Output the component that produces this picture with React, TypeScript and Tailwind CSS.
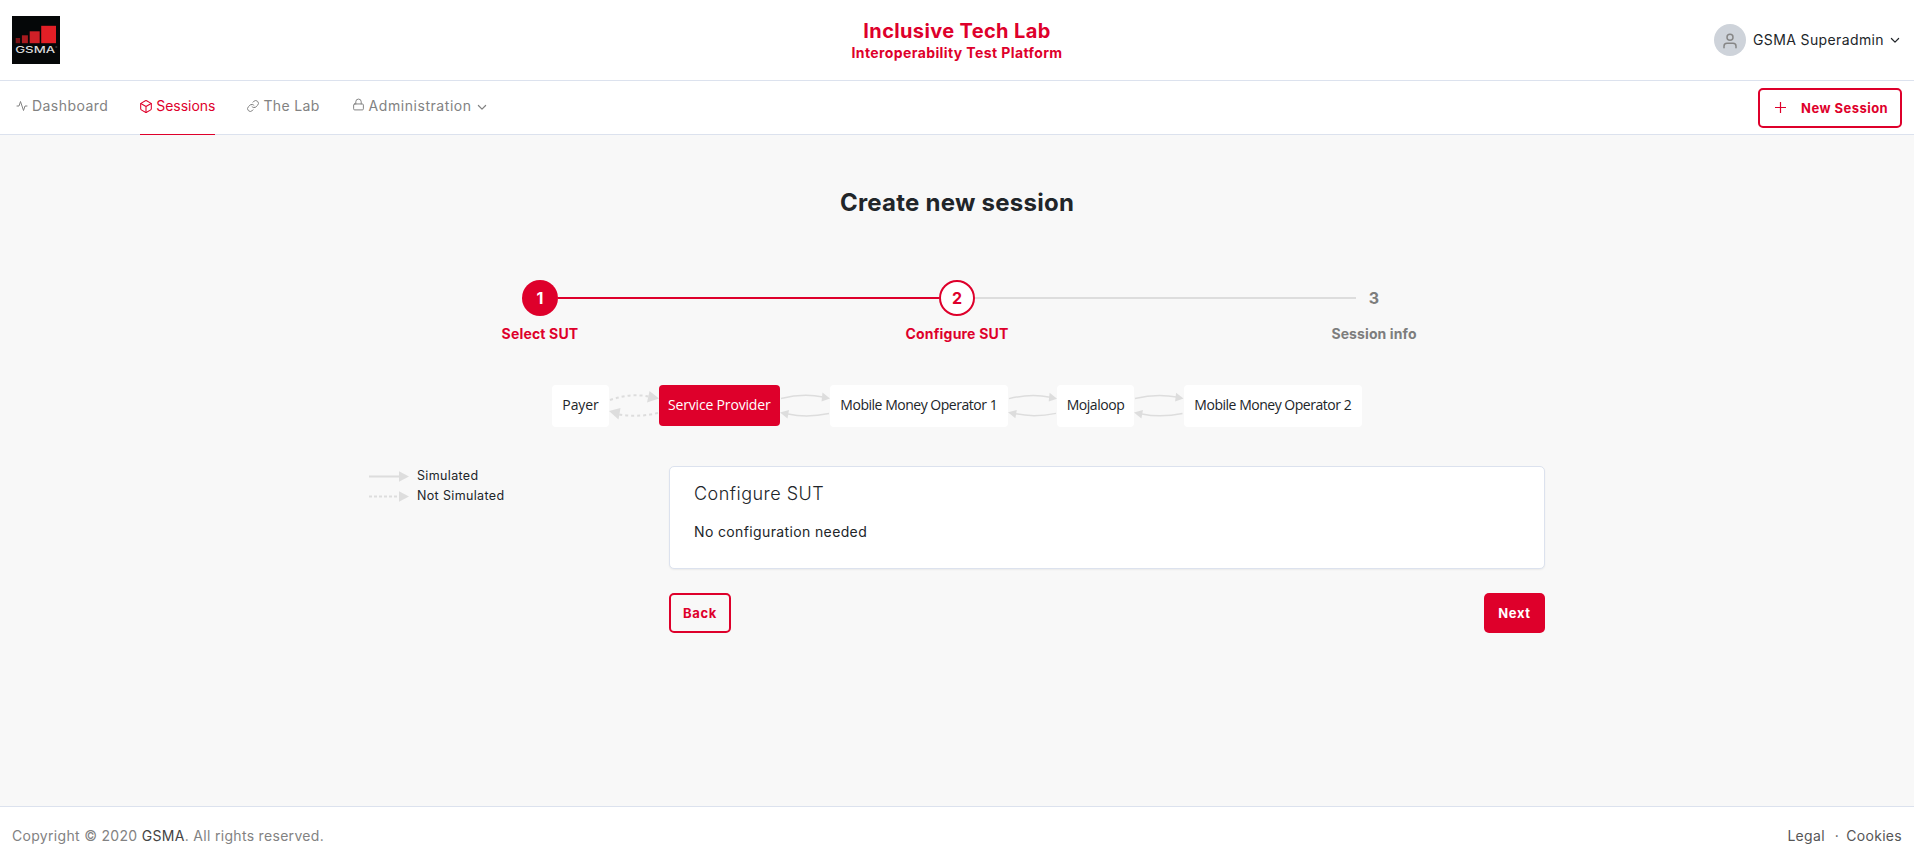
import React from "react";

function Chevron({ className }: { className?: string }) {
  return (
    <svg className={className} viewBox="0 0 10 7" fill="none" stroke="currentColor" strokeWidth="1.2" strokeLinecap="round" strokeLinejoin="round">
      <path d="M1.4 1.5 5 5.1l3.6-3.6" />
    </svg>
  );
}

function Logo() {
  return (
    <svg className="h-12 w-12" viewBox="0 0 48 48">
      <rect width="48" height="48" fill="#050708" />
      <rect x="3.7" y="22" width="4.4" height="5.2" fill="#7a1215" />
      <rect x="9.9" y="19.3" width="6" height="7.9" fill="#a91a1e" />
      <rect x="17.7" y="15.3" width="10" height="11.9" fill="#cf2027" />
      <rect x="29.2" y="9.8" width="14.8" height="17.4" fill="#e21f26" />
      <text x="3.2" y="37" fontFamily="Inter, sans-serif" fontSize="9" fontWeight="500" fill="#d9d9d9" textLength="40" lengthAdjust="spacingAndGlyphs">GSMA</text>
      <rect x="43.4" y="30.6" width="1.8" height="0.8" fill="#777" />
    </svg>
  );
}

function DashedArrows({ className }: { className: string }) {
  return (
    <svg className={className} viewBox="0 0 50 42" fill="none" stroke="#dddddd" strokeWidth="2">
      <path d="M1 15Q23 7.500 42 12" strokeDasharray="3 3" />
      <path d="M49 28Q27 33 8 29" strokeDasharray="3 3" />
      <g fill="#dddddd" stroke="none">
        <path d="M40.500 6 50 13.500 38 17.500z" />
        <path d="M0 26 11.500 23 9.500 34.500z" />
      </g>
    </svg>
  );
}

function SolidArrows({ className }: { className: string }) {
  return (
    <svg className={className} viewBox="0 0 50 42" fill="none" stroke="#dddddd" strokeWidth="1.5">
      <path d="M1 13.500Q23 8 43 12" />
      <path d="M49 28.500Q27 33 8 29" />
      <g fill="#dddddd" stroke="none">
        <path d="M42.500 7.500 50 13.500 41.500 16.500z" />
        <path d="M0 27.500 9 25 7.500 33.500z" />
      </g>
    </svg>
  );
}

function LegendArrow({ dashed = false }: { dashed?: boolean }) {
  return (
    <svg className="h-[11px] w-10" viewBox="0 0 40 11">
      <path d="M0 5.500H30" stroke="#dddddd" strokeWidth="2" strokeDasharray={dashed ? "3 2" : undefined} />
      <path d="M30 .3 40 5.500 30 10.700z" fill="#dddddd" />
    </svg>
  );
}

function Node({ className, children }: { className: string; children: string }) {
  return (
    <div className={`flex items-center justify-center whitespace-nowrap rounded-[4px] pb-0.5 font-['Open_Sans',sans-serif] text-[14px] leading-5 ${className}`}>
      {children}
    </div>
  );
}

export default function App() {
  return (
    <div className="flex h-[868px] w-full flex-col bg-[#f8f8f8] font-[Inter,sans-serif] text-[14px] leading-[22px] text-[#212529]">
      <header className="grid h-[81px] grid-cols-[1fr_auto_1fr] border-b border-[#dce2ee] bg-white px-3">
        <div className="flex items-center"><Logo /></div>
        <div className="flex flex-col items-center pt-[19px] font-bold text-[#de002b]">
          <div className="text-[20px] leading-6 tracking-[0.36px]">Inclusive Tech Lab</div>
          <div className="text-[14px] leading-5 tracking-[0.4px]">Interoperability Test Platform</div>
        </div>
        <div className="flex items-center justify-end">
          <div className="flex h-8 w-8 items-center justify-center rounded-full bg-[#ced3da]">
            <svg className="mt-0.5 h-[18px] w-[18px]" viewBox="0 0 24 24" fill="none" stroke="#868686" strokeWidth="2" strokeLinecap="round" strokeLinejoin="round">
              <path d="M20 21v-2a4 4 0 0 0-4-4H8a4 4 0 0 0-4 4v2" />
              <circle cx="12" cy="7" r="4" />
            </svg>
          </div>
          <span className="ml-[7px] tracking-[0.38px]">GSMA Superadmin</span>
          <Chevron className="ml-1.5 mr-0.5 h-[7px] w-[10px]" />
        </div>
      </header>

      <nav className="flex h-[54px] border-b border-[#dce2ee] bg-white pl-4 pr-3 text-[#828282]">
        <a className="mr-8 flex items-center pb-[3px]">
          <svg className="mr-1 h-3 w-3" viewBox="0 0 24 24" fill="none" stroke="currentColor" strokeWidth="2" strokeLinecap="round" strokeLinejoin="round">
            <path d="M22 12h-4l-3 9L9 3l-3 9H2" />
          </svg>
          <span className="tracking-[0.44px]">Dashboard</span>
        </a>
        <a className="mr-8 flex h-[54px] items-center border-b border-[#de002b] pb-[3px] text-[#de002b]">
          <svg className="mr-1 h-[13px] w-3" viewBox="2 1 20 22" fill="none" stroke="currentColor" strokeWidth="1.800" strokeLinecap="round" strokeLinejoin="round">
            <path d="M21 16V8a2 2 0 0 0-1-1.730l-7-4a2 2 0 0 0-2 0l-7 4A2 2 0 0 0 3 8v8a2 2 0 0 0 1 1.730l7 4a2 2 0 0 0 2 0l7-4A2 2 0 0 0 21 16z" />
            <path d="M3.270 6.960 12 12.010l8.730-5.050M12 22.080V12" />
          </svg>
          <span className="tracking-[-0.02px]">Sessions</span>
        </a>
        <a className="mr-8 flex items-center pb-[3px]">
          <svg className="mr-1 h-3 w-3" viewBox="1 1 22 22" fill="none" stroke="currentColor" strokeWidth="1.800" strokeLinecap="round" strokeLinejoin="round">
            <path d="M10 13a5 5 0 0 0 7.540.540l3-3a5 5 0 0 0-7.070-7.070l-1.720 1.710" />
            <path d="M14 11a5 5 0 0 0-7.540-.540l-3 3a5 5 0 0 0 7.070 7.070l1.710-1.710" />
          </svg>
          <span className="tracking-[0.35px]">The Lab</span>
        </a>
        <a className="flex items-center pb-[3px]">
          <svg className="mb-1 mr-1 h-[13px] w-[13px]" viewBox="0 0 24 24" fill="none" stroke="currentColor" strokeWidth="1.800" strokeLinecap="round" strokeLinejoin="round">
            <rect x="3" y="11" width="18" height="11" rx="2" />
            <path d="M7 11V7a5 5 0 0 1 10 0v4" />
          </svg>
          <span className="tracking-[0.55px]">Administration</span>
          <Chevron className="ml-[5px] mt-[3px] h-[7px] w-[10px]" />
        </a>
        <button className="ml-auto mt-[7px] flex h-10 w-36 items-center rounded-[5px] border-2 border-[#de002b] pb-px pl-[15px] text-[13px] font-bold text-[#de002b]">
          <svg className="mr-4 h-[11px] w-[11px]" viewBox="0 0 11 11" stroke="currentColor" strokeWidth="1.2"><path d="M5.500 0v11M0 5.500h11" /></svg>
          <span className="-ml-px tracking-[0.47px]">New Session</span>
        </button>
      </nav>

      <main className="flex flex-1 flex-col items-center pt-[52px]">
        <h1 className="text-[24px] font-bold leading-8 tracking-[0.25px]">Create new session</h1>
        <div className="mt-[61px] flex h-9 w-[870px] items-center text-[16px] font-bold">
          <div className="flex h-9 w-9 items-center justify-center rounded-full bg-[#de002b] text-white">1</div>
          <div className="h-0.5 flex-1 bg-[#de002b]" />
          <div className="flex h-9 w-9 items-center justify-center rounded-full border-2 border-[#de002b] bg-white text-[#de002b]">2</div>
          <div className="h-0.5 flex-1 bg-[#dddddd]" />
          <div className="flex h-9 w-9 items-center justify-center text-[#7d7d7d]">3</div>
        </div>
        <div className="mt-2 grid w-[1251px] grid-cols-3 text-center text-[14px] font-bold leading-5 text-[#de002b]">
          <div className="tracking-[0.17px]">Select SUT</div>
          <div className="tracking-[0.2px]">Configure SUT</div>
          <div className="tracking-[0.1px] text-[#7d7d7d]">Session info</div>
        </div>

        <div className="mt-[41px] flex h-[42px]">
          <Node className="w-[56.5px] bg-white tracking-[-0.1px]">Payer</Node>
          <DashedArrows className="h-[42px] w-[50px]" />
          <Node className="mb-px w-[121px] bg-[#de002b] tracking-[-0.17px] text-white">Service Provider</Node>
          <SolidArrows className="h-[42px] w-[50px]" />
          <Node className="w-[178px] bg-white tracking-[-0.48px]">Mobile Money Operator 1</Node>
          <SolidArrows className="h-[42px] w-[49px]" />
          <Node className="w-[77.5px] bg-white tracking-[-0.45px]">Mojaloop</Node>
          <SolidArrows className="h-[42px] w-[49.5px]" />
          <Node className="w-[178px] bg-white tracking-[-0.48px]">Mobile Money Operator 2</Node>
        </div>

        <div className="mt-[39px] flex w-[1176px]">
          <div className="w-[300px] text-[12.5px] leading-5 tracking-[0.35px]">
            <div className="flex items-center gap-2"><LegendArrow />Simulated</div>
            <div className="flex items-center gap-2"><LegendArrow dashed />Not Simulated</div>
          </div>
          <div className="flex-1">
            <section className="h-[103px] rounded-[5px] border border-[#dce2ee] bg-white px-6 pt-[15px] shadow-[0_1px_2px_rgba(0,0,0,0.06)]">
              <h2 className="text-[18px] font-[350] leading-6 tracking-[0.48px]">Configure SUT</h2>
              <p className="mt-[15px] text-[14px] leading-[22px] tracking-[0.37px]">No configuration needed</p>
            </section>
            <div className="mt-6 flex justify-between text-[13px] font-bold tracking-[0.65px]">
              <button className="h-10 w-[62px] rounded-[5px] border-2 border-[#de002b] pb-px text-[#de002b]">Back</button>
              <button className="h-10 w-[61px] rounded-[5px] bg-[#de002b] pb-px text-white">Next</button>
            </div>
          </div>
        </div>
      </main>

      <footer className="flex h-[62px] items-center justify-between border-t border-[#dce2ee] bg-white px-3 pb-[3px] tracking-[0.31px] text-[#828282]">
        <div>Copyright © 2020 <a className="text-[#444]">GSMA</a>. All rights reserved.</div>
        <div className="flex text-[#565656]"><a>Legal</a><span className="ml-2.5 mr-[7px]">·</span><a>Cookies</a></div>
      </footer>
    </div>
  );
}
